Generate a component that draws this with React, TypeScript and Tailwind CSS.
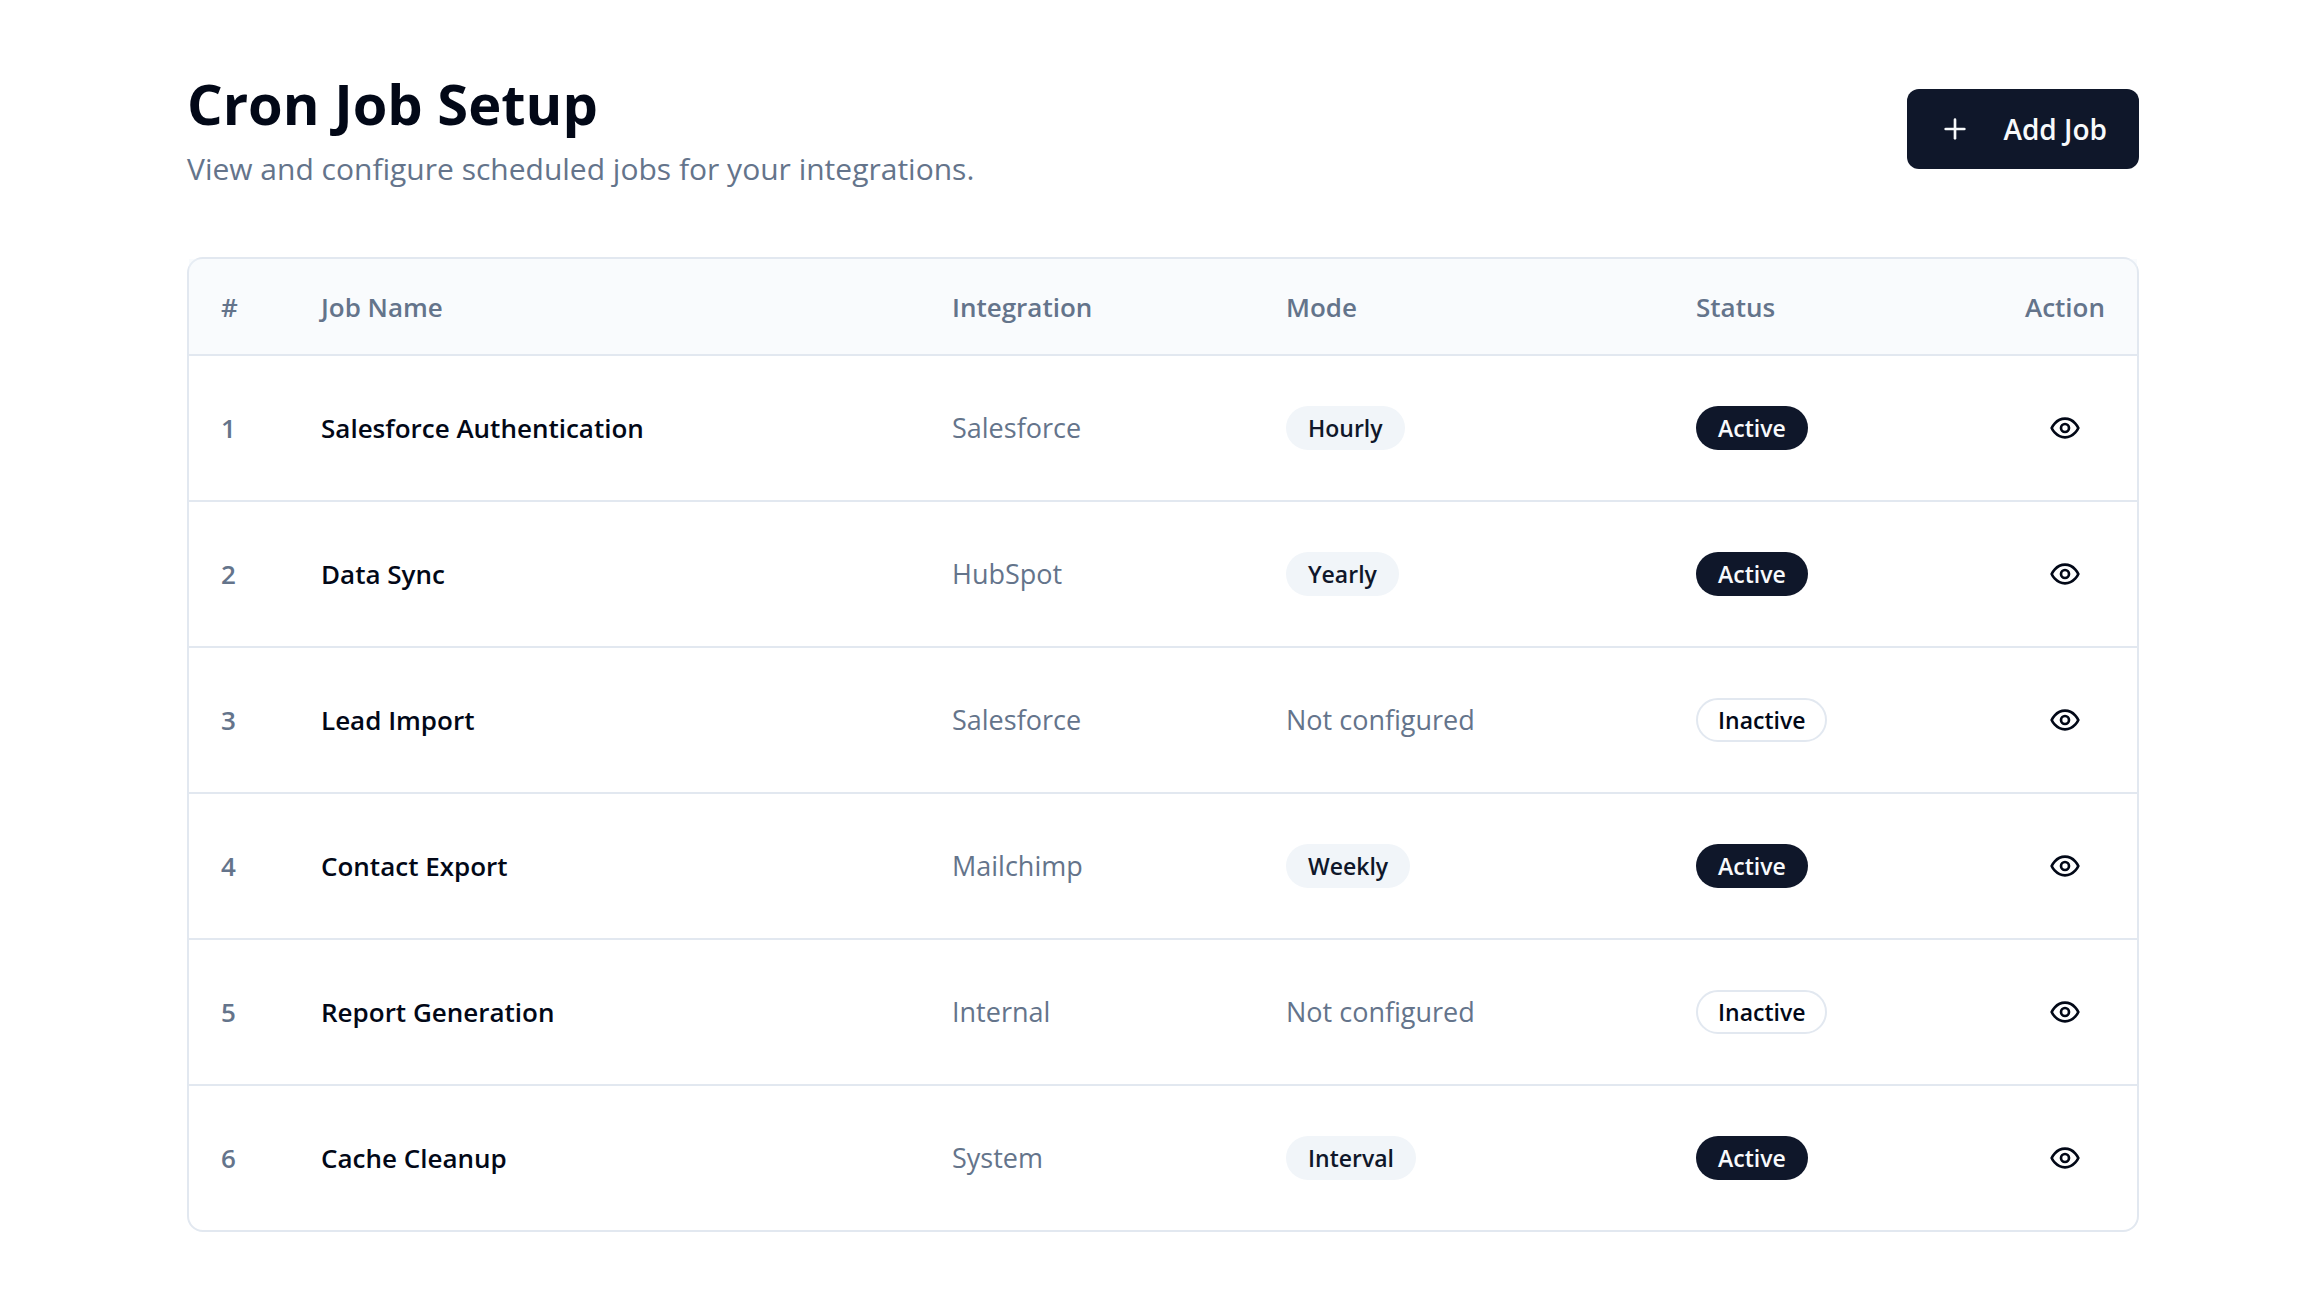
import { Plus } from "lucide-react";

type Job = {
  id: number;
  name: string;
  integration: string;
  mode: string | null;
  active: boolean;
};

const jobs: Job[] = [
  { id: 1, name: "Salesforce Authentication", integration: "Salesforce", mode: "Hourly", active: true },
  { id: 2, name: "Data Sync", integration: "HubSpot", mode: "Yearly", active: true },
  { id: 3, name: "Lead Import", integration: "Salesforce", mode: null, active: false },
  { id: 4, name: "Contact Export", integration: "Mailchimp", mode: "Weekly", active: true },
  { id: 5, name: "Report Generation", integration: "Internal", mode: null, active: false },
  { id: 6, name: "Cache Cleanup", integration: "System", mode: "Interval", active: true },
];

function EyeIcon() {
  return (
    <svg
      className="size-8"
      viewBox="0 0 24 24"
      fill="none"
      stroke="currentColor"
      strokeWidth="2"
      strokeLinecap="round"
      strokeLinejoin="round"
      aria-hidden="true"
    >
      <path d="M2 12s3-7 10-7 10 7 10 7-3 7-10 7-10-7-10-7Z" />
      <circle cx="12" cy="12" r="3" />
    </svg>
  );
}

const badge = "inline-flex h-11 items-center rounded-full border-2 px-5 text-[23px] font-semibold";

function StatusBadge({ active }: { active: boolean }) {
  return active ? (
    <span className={`${badge} border-transparent bg-[#0f172a] text-[#f8fafc]`}>Active</span>
  ) : (
    <span className={`${badge} border-[#e2e8f0] text-[#020817]`}>Inactive</span>
  );
}

function JobRow({ job }: { job: Job }) {
  return (
    <tr className="border-b-2 border-[#e2e8f0] last:border-b-0">
      <td className="p-8 text-[26px] font-semibold text-[#64748b]">{job.id}</td>
      <td className="p-8 text-[26px] font-semibold">{job.name}</td>
      <td className="p-8 text-[#64748b]">{job.integration}</td>
      <td className="p-8 text-[#64748b]">
        {job.mode ? (
          <span className={`${badge} border-transparent bg-[#f1f5f9] text-[#0f172a]`}>{job.mode}</span>
        ) : (
          "Not configured"
        )}
      </td>
      <td className="p-8">
        <StatusBadge active={job.active} />
      </td>
      <td className="p-8">
        <button
          type="button"
          aria-label={`View ${job.name}`}
          className="ml-auto flex size-20 items-center justify-center rounded-xl hover:bg-[#f1f5f9]"
        >
          <EyeIcon />
        </button>
      </td>
    </tr>
  );
}

export default function App() {
  return (
    <main className="min-h-screen bg-white pt-[69px] pr-[183px] pb-15 pl-[187px] font-['Open_Sans','Noto_Sans',sans-serif] text-[#020817]">
      <header className="flex items-center justify-between">
        <div>
          <h1 className="text-[56px] leading-17 font-bold">Cron Job Setup</h1>
          <p className="mt-3 text-[30px] leading-10 text-[#64748b]">
            View and configure scheduled jobs for your integrations.
          </p>
        </div>
        <button
          type="button"
          className="flex h-20 items-center gap-8 rounded-xl bg-[#0f172a] px-8 text-[28px] font-semibold text-[#f8fafc]"
        >
          <Plus className="size-8" aria-hidden="true" />
          Add Job
        </button>
      </header>

      <section className="mt-17 rounded-2xl border-2 border-[#e2e8f0]">
        <table className="w-full table-fixed text-left text-[27px] leading-10">
          <colgroup>
            <col className="w-[100px]" />
            <col />
            <col className="w-[334px]" />
            <col className="w-[410px]" />
            <col className="w-[288px]" />
            <col className="w-[185px]" />
          </colgroup>
          <thead className="bg-[#f1f5f9]/40 text-[26px] text-[#64748b]">
            <tr className="h-24 border-b-2 border-[#e2e8f0]">
              <th scope="col" className="px-8 font-semibold">#</th>
              <th scope="col" className="px-8 font-semibold">Job Name</th>
              <th scope="col" className="px-8 font-semibold">Integration</th>
              <th scope="col" className="px-8 font-semibold">Mode</th>
              <th scope="col" className="px-8 font-semibold">Status</th>
              <th scope="col" className="px-8 text-right font-semibold">Action</th>
            </tr>
          </thead>
          <tbody>
            {jobs.map((job) => (
              <JobRow key={job.id} job={job} />
            ))}
          </tbody>
        </table>
      </section>
    </main>
  );
}
